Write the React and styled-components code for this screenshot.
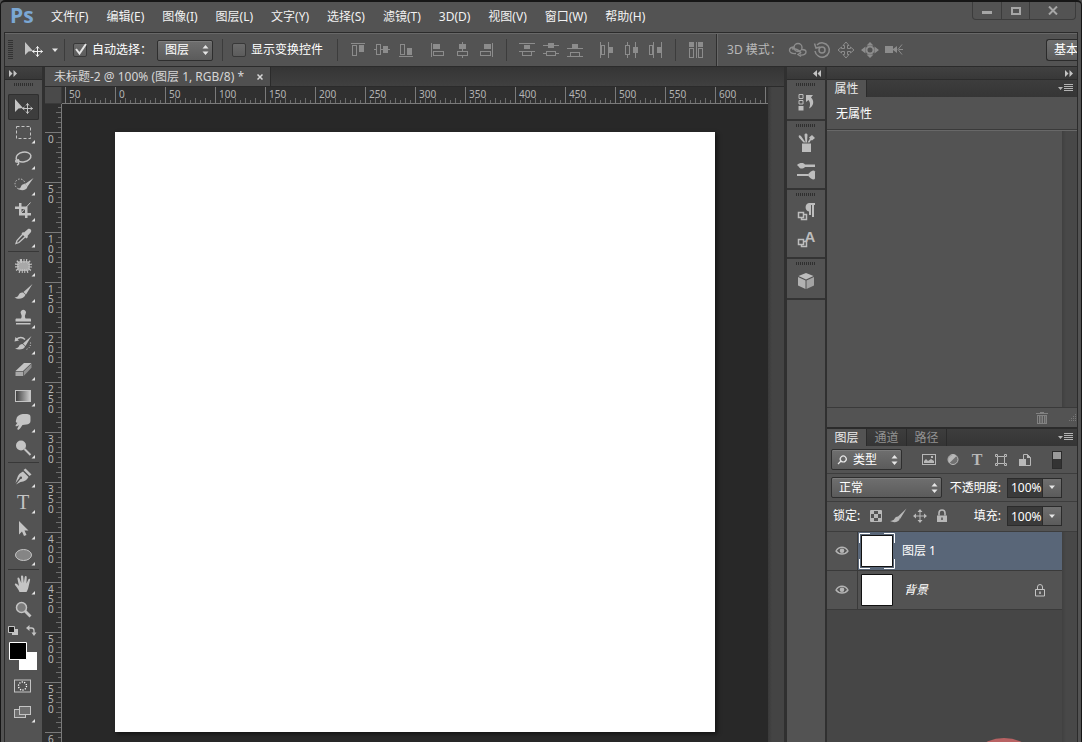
import styled, { createGlobalStyle, css } from "styled-components";

const GlobalStyle = createGlobalStyle`
  * {
    box-sizing: border-box;
  }

  body {
    margin: 0;
    background: #535353;
    color: #f0f0f0;
    font: 12px/16px "Noto Sans", "Noto Sans CJK SC", sans-serif;
  }

  button,
  input,
  select {
    margin: 0;
    padding: 0;
    border: none;
    background: none;
    color: inherit;
    font: inherit;
  }

  svg {
    display: block;
    flex: none;
  }
`;

/* ---------- window ---------- */

const Window = styled.div`
  display: flex;
  flex-direction: column;
  height: 100vh;
  overflow: hidden;
  border: solid #161616;
  border-width: 2px 1px 0;
  border-radius: 5px 5px 0 0;
  background: #535353;
`;

const TitleBar = styled.header`
  display: flex;
  flex: none;
  height: 30px;
  padding: 0 5px 0 9px;
`;

const Logo = styled.span`
  width: 41px;
  color: #7ba7d4;
  font: bold 21px/27px "Open Sans", "Noto Sans", sans-serif;
`;

const Menu = styled.nav`
  display: flex;
  flex: 1;
  gap: 18px;
  padding-top: 7px;
`;

const MenuItem = styled.a`
  color: #f2f2f2;
  text-decoration: none;
  white-space: nowrap;
`;

const WindowButtons = styled.div`
  display: flex;
  height: 18px;
  border: 1px solid #3c3c3c;
  border-top: none;
  border-radius: 0 0 4px 4px;
`;

const WindowButton = styled.button`
  display: grid;
  place-items: center;
  width: ${(props) => (props.$wide ? "46px" : "28px")};
  color: #a6a6a6;

  & + & {
    border-left: 1px solid #3c3c3c;
  }
`;

const Body = styled.div`
  display: flex;
  flex: 1;
  flex-direction: column;
  min-height: 0;
  margin: 0 3px;
  border: solid #2b2b2b;
  border-width: 1px 1px 0;
`;

/* ---------- options bar ---------- */

const OptionsBar = styled.div`
  display: flex;
  flex: none;
  align-items: center;
  height: 34px;
  overflow: hidden;
  border-top: 1px solid #686868;
  border-bottom: 1px solid #2b2b2b;
`;

const BarGrip = styled.span`
  width: 5px;
  height: 20px;
  margin: 0 11px 0 3px;
  background: repeating-linear-gradient(#333333 0 1px, transparent 1px 2px);
`;

const Divider = styled.span`
  flex: none;
  width: 1px;
  height: 22px;
  margin: 0 9px;
  background: #3c3c3c;
`;

const PresetDivider = styled(Divider)`
  margin: 0 8px 0 5px;
`;

const TallDivider = styled(Divider)`
  width: 2px;
  height: 32px;
  border-left: 1px solid #2f2f2f;
  background: #686868;
`;

const CheckLabel = styled.label`
  display: flex;
  align-items: center;
  gap: 5px;
  margin-right: 5px;
  color: #ffffff;
  white-space: nowrap;
`;

const CheckBox = styled.span`
  display: grid;

  & > * {
    grid-area: 1 / 1;
  }

  svg {
    pointer-events: none;
  }
`;

const CheckInput = styled.input`
  width: 14px;
  height: 14px;
  appearance: none;
  border: 1px solid #383838;
  border-radius: 2px;
  background: linear-gradient(#6a6a6a, #5c5c5c);
`;

const SelectBox = styled.span`
  display: grid;
  flex: none;
  align-items: center;
  width: ${(props) => props.$width};
  height: 21px;
  border: 1px solid #2e2e2e;
  border-radius: 2px;
  background: linear-gradient(#6f6f6f, #5b5b5b);
  box-shadow: inset 0 1px #7d7d7d;

  & > * {
    grid-area: 1 / 1;
  }

  svg {
    pointer-events: none;
  }
`;

const SelectInput = styled.select`
  width: 100%;
  height: 19px;
  padding-left: ${(props) => props.$indent};
  appearance: none;
  color: #ffffff;
`;

const SelectArrows = styled.svg`
  justify-self: end;
  margin-right: 3px;
`;

const IconGroup = styled.div`
  display: flex;
  flex: none;
  gap: 4px;
  margin: 0 1px;
  color: #8c8c8c;

  & + & {
    margin-left: 11px;
  }
`;

const IconButton = styled.button`
  display: grid;
  place-items: center;
  width: 20px;
  height: 20px;
`;

const CaretButton = styled.button`
  margin-left: 7px;
`;

const ModeLabel = styled.span`
  width: 60px;
  color: #b8b8b8;
  white-space: nowrap;
`;

const WorkspaceButton = styled.button`
  flex: none;
  width: 31px;
  height: 22px;
  margin-left: auto;
  overflow: hidden;
  padding-left: 7px;
  border: 1px solid #2b2b2b;
  border-right: none;
  border-radius: 3px 0 0 3px;
  background: linear-gradient(#707070, #5b5b5b);
  color: #ffffff;
  text-align: left;
  white-space: nowrap;
`;

/* ---------- workspace ---------- */

const Workspace = styled.div`
  display: flex;
  flex: 1;
  min-height: 0;
`;

const DockHeader = styled.div`
  display: flex;
  flex: none;
  align-items: center;
  justify-content: ${(props) => (props.$end ? "flex-end" : "flex-start")};
  height: 13px;
  padding: 0 4px;
  border-bottom: 1px solid #2b2b2b;
  background: linear-gradient(#414141, #383838);
  color: #c4c4c4;
`;

const gripStripes = css`
  background: repeating-linear-gradient(
    90deg,
    #2f2f2f 0 1px,
    transparent 1px 2px
  );
`;

const ToolColumn = styled.aside`
  display: flex;
  flex: none;
  flex-direction: column;
  width: 40px;
  border-right: 3px solid #303030;
`;

const Tools = styled.div`
  display: flex;
  flex-direction: column;
  padding: 3px 3px 0;
`;

const ToolGrip = styled.span`
  width: 20px;
  height: 3px;
  margin: 0 0 8px 6px;
  ${gripStripes}
`;

const ToolButton = styled.button`
  width: 31px;
  height: 26px;
  color: #c4c4c4;
  ${(props) =>
    props.$active &&
    css`
      border-radius: 2px;
      background: #3d3d3d;
      box-shadow: inset 0 0 0 1px #2f2f2f;
    `}
`;

const ToolDivider = styled.span`
  height: 1px;
  margin: 1px 0;
  background: #383838;
`;

const Swatches = styled.div`
  height: 50px;
`;

/* ---------- document ---------- */

const Document = styled.main`
  display: flex;
  flex: 1;
  flex-direction: column;
  min-width: 0;
`;

const TabStrip = styled.div`
  display: flex;
  flex: none;
  height: 20px;
  border-bottom: 1px solid #2b2b2b;
  background: linear-gradient(#353535, #404040);
`;

const DocumentTab = styled.div`
  display: flex;
  align-items: center;
  gap: 13px;
  padding: 1px 7px 0 9px;
  border-right: 1px solid #2b2b2b;
  background: #505050;
  color: #d6d6d6;
  white-space: nowrap;
`;

const DocumentView = styled.div`
  display: grid;
  flex: 1;
  grid-template: 17px 1fr / 17px 1fr 16px;
  min-height: 0;
  overflow: hidden;
`;

const RulerCorner = styled.div`
  border: solid #3a3a3a;
  border-width: 0 1px 1px 0;
  background: #4a4a4a;
`;

const HorizontalRuler = styled.div`
  display: flex;
  min-width: 0;
  overflow: hidden;
  padding-left: 3px;
  border-bottom: 1px solid #7a7a7a;
  background: #303030;
`;

const HorizontalMark = styled.span`
  flex: none;
  width: 50px;
  padding-left: 3px;
  border-left: 1px solid #7a7a7a;
  background:
    repeating-linear-gradient(90deg, transparent 0 4px, #6c6c6c 4px 5px) 0
      100% / 100% 3px no-repeat,
    repeating-linear-gradient(90deg, transparent 0 9px, #6c6c6c 9px 10px) 0
      100% / 100% 5px no-repeat;
  color: #b4b4b4;
  font-size: 10px;
  line-height: 14px;
`;

const VerticalRuler = styled.div`
  min-height: 0;
  overflow: hidden;
  border-right: 1px solid #7a7a7a;
  background: #303030;
`;

const VerticalStart = styled.div`
  height: 28px;
  background:
    repeating-linear-gradient(0deg, transparent 0 4px, #6c6c6c 4px 5px) 100% 0 /
      3px 100% no-repeat,
    repeating-linear-gradient(0deg, transparent 0 9px, #6c6c6c 9px 10px) 100%
      0 / 5px 100% no-repeat;
`;

const VerticalMark = styled.div`
  display: flex;
  flex-direction: column;
  height: 50px;
  padding: 1px 0 0 3px;
  border-top: 1px solid #7a7a7a;
  background:
    repeating-linear-gradient(transparent 0 4px, #6c6c6c 4px 5px) 100% 0 / 3px
      100% no-repeat,
    repeating-linear-gradient(transparent 0 9px, #6c6c6c 9px 10px) 100% 0 / 5px
      100% no-repeat;
  color: #b4b4b4;
  font-size: 10px;
  line-height: 10px;
`;

const ScrollTrack = styled.div`
  background: linear-gradient(90deg, #393939, #444444 4px);
`;

const Pasteboard = styled.div`
  min-width: 0;
  min-height: 0;
  overflow: hidden;
  padding: 28px 0 0 53px;
  background: #282828;
`;

const Paper = styled.div`
  width: 600px;
  height: 600px;
  background: #ffffff;
  box-shadow: 2px 2px 4px #141414;
`;

/* ---------- icon dock ---------- */

const IconDock = styled.aside`
  display: flex;
  flex: none;
  flex-direction: column;
  width: 43px;
  border: solid #303030;
  border-width: 0 2px 0 3px;
`;

const DockGroup = styled.div`
  display: flex;
  flex-direction: column;
  align-items: center;
  padding: 3px 0;
  border-bottom: 2px solid #343434;
`;

const DockGrip = styled.span`
  width: 20px;
  height: 3px;
  margin-bottom: 2px;
  ${gripStripes}
`;

const DockButton = styled.button`
  display: grid;
  place-items: center;
  width: 30px;
  height: 28px;
  color: #bdbdbd;
`;

/* ---------- panels ---------- */

const Panels = styled.aside`
  display: flex;
  flex: none;
  flex-direction: column;
  width: 250px;
`;

const PanelTabs = styled.div`
  display: flex;
  flex: none;
  height: 17px;
  background: linear-gradient(#3d3d3d, #353535);
`;

const PanelTab = styled.button`
  width: 40px;
  border-right: 1px solid #2b2b2b;
  background: ${(props) => (props.$active ? "#535353" : "transparent")};
  color: ${(props) => (props.$active ? "#ececec" : "#929292")};
`;

const PanelMenuButton = styled.button`
  margin: 0 4px 0 auto;
  color: #b4b4b4;
`;

const PropertiesMessage = styled.p`
  flex: none;
  height: 33px;
  margin: 0;
  padding: 9px;
  border-bottom: 1px solid #3a3a3a;
  color: #ffffff;
`;

const PropertiesBody = styled.div`
  display: flex;
  flex: none;
  justify-content: flex-end;
  height: 277px;
  border-top: 1px solid #686868;
`;

const PanelTrack = styled.div`
  width: 15px;
  background: linear-gradient(90deg, #404040, #484848 4px);
`;

const PanelFooter = styled.div`
  display: flex;
  flex: none;
  align-items: center;
  justify-content: flex-end;
  gap: 12px;
  height: 22px;
  border-top: 1px solid #3a3a3a;
  border-bottom: 2px solid #2b2b2b;
  color: #828282;
`;

const PanelRow = styled.div`
  display: flex;
  flex: none;
  align-items: center;
  height: 28px;
  padding: 0 15px 0 4px;
  border-bottom: 1px solid #3d3d3d;
  color: #ffffff;
`;

const LockRow = styled(PanelRow)`
  height: 30px;
  padding-bottom: 1px;
`;

const RowLabel = styled.label`
  margin: 0 6px 0 auto;
  white-space: nowrap;
`;

const LockLabel = styled.span`
  width: 35px;
  padding-left: 2px;
  white-space: nowrap;
`;

const RowIcons = styled.div`
  display: flex;
  gap: ${(props) => props.$gap};
  margin-left: ${(props) => props.$indent};
  color: #b8b8b8;
`;

const ToggleButton = styled.button`
  width: 10px;
  height: 18px;
  margin-left: auto;
  border: 1px solid #2b2b2b;
  background: linear-gradient(#9a9a9a 0 7px, #333333 7px);
`;

const ValueInput = styled.input`
  width: 36px;
  height: 20px;
  padding-left: 3px;
  border: 1px solid #2b2b2b;
  background: #3a3a3a;
`;

const ValueButton = styled.button`
  display: grid;
  place-items: center;
  width: 19px;
  height: 20px;
  border: 1px solid #2b2b2b;
  border-left: none;
  background: linear-gradient(#707070, #5b5b5b);
`;

const LayerArea = styled.div`
  display: flex;
  flex: 1;
  min-height: 0;
  background: #464646;
`;

const LayerList = styled.ul`
  flex: 1;
  margin: 0;
  padding: 0;
  list-style: none;
`;

const LayerItem = styled.li`
  display: flex;
  align-items: center;
  height: 39px;
  padding-right: 16px;
  border-bottom: 1px solid #3a3a3a;
  background: ${(props) =>
    props.$selected
      ? "linear-gradient(90deg, #535353 30px, #596678 30px)"
      : "#535353"};
  color: #ffffff;
`;

const EyeButton = styled.button`
  display: grid;
  place-items: center;
  width: 31px;
  height: 38px;
  border-right: 1px solid #3a3a3a;
  color: #b4b4b4;
`;

const LayerName = styled.span`
  flex: 1;
  padding-left: ${(props) => (props.$italic ? "8px" : "6px")};
  font-style: ${(props) => (props.$italic ? "italic" : "normal")};
`;

const Badge = styled.span`
  position: fixed;
  right: 36px;
  bottom: -80px;
  width: 84px;
  height: 84px;
  border-radius: 50%;
  background: #b86263;
`;

/* ---------- icons ---------- */

const brush = (
  <path d="M24.5 5 15.5 13l2.5 2.5zM15 13.5c-2.4-.3-3.8 1-4.500 2.700-.6 1.400-1.800 2-4 2.300 3.500 2.300 9.500 1.400 11-2.700z" />
);

const fourWay = (x, y, r) => (
  <g fill="none" stroke="currentColor" transform={`translate(${x} ${y})`}>
    <path d={`M${-r} 0H${r}M0 ${-r}V${r}`} />
    <path
      d={`M-1.5 ${2 - r}L0 ${-r}l1.5 2M-1.5 ${r - 2}L0 ${r}l1.5-2M${
        2 - r
      }-1.5L${-r} 0l2 1.5M${r - 2}-1.5L${r} 0l-2 1.5`}
    />
  </g>
);

const toolIcons = {
  move: (
    <>
      <path d="M7 5v13l3.5-3.5L15 14z" />
      {fourWay(19.5, 14.5, 5)}
    </>
  ),
  marquee: (
    <rect
      x="8.5"
      y="6.5"
      width="14"
      height="12"
      fill="none"
      stroke="currentColor"
      strokeDasharray="3 2"
    />
  ),
  lasso: (
    <g fill="none" stroke="currentColor" strokeWidth="1.5">
      <ellipse
        cx="15.500"
        cy="11"
        rx="7.5"
        ry="4.8"
        transform="rotate(-12 15.5 11)"
      />
      <path d="M9 13.500c-2 1-1.500 3 .5 2.500s1.500-2.500 0-2.500M10 16c1.500 1 .5 2.500-1 3" />
    </g>
  ),
  quickSelect: (
    <>
      <circle
        cx="12"
        cy="12"
        r="5"
        fill="none"
        stroke="currentColor"
        strokeDasharray="1.5 1.5"
      />
      <path d="m25.500 6-8.500 6 2.500 2.500zM16.500 12c-2 0-3 1-3.500 2.500-.5 1.500-1.500 2-3 2.500 3 2 9 1.500 9.500-2.500z" />
    </>
  ),
  crop: (
    <>
      <path d="M11 5h2.500v10H23v2.500H11zM7 8.500h12.500V20H17v-9H7z" />
      <path d="m12.500 15.500 10-11" stroke="currentColor" />
    </>
  ),
  eyedropper: (
    <>
      <path d="M16 8.500 20 5c2-1 4 1 3 3l-3.500 4 .5 1-1.500 1.500-5-5L15 8z" />
      <path
        d="m15 10-6 6.500-1 3 3-1 6.500-6"
        fill="none"
        stroke="currentColor"
        strokeWidth="1.3"
      />
    </>
  ),
  patch: (
    <>
      <rect x="9" y="8" width="13" height="10" rx="3" fillOpacity=".75" />
      <rect
        x="9"
        y="8"
        width="13"
        height="10"
        rx="4"
        fill="none"
        stroke="currentColor"
        strokeWidth="4"
        strokeDasharray="1 1.5"
      />
    </>
  ),
  brush,
  stamp: (
    <path d="M13 9a2.700 2.700 0 1 1 4.600 0c-1 1.500-.8 3 0 4.500H22c.8 0 1 .5 1 1.500v1.500H7.500V15c0-1 .2-1.500 1-1.500H13c.8-1.500 1-3 0-4.500zM8 18h14.500v1.500H8z" />
  ),
  historyBrush: (
    <>
      <path d="m23.500 5-8.500 7.500 2.500 2.500zM14.500 13c-2 0-3 1-3.500 2.200-.5 1.300-2 2-4 2.300 3.500 2 9.500 1 10-2.200z" />
      <path
        d="M8 8.500c4-3 7-2 9 0"
        fill="none"
        stroke="currentColor"
        strokeWidth="1.5"
      />
      <path d="m6.500 10.500 1-4.500 3.500 3.500z" />
      <path
        d="M22.500 11.500c.5 3-1 6-4.500 7"
        fill="none"
        stroke="currentColor"
        strokeDasharray="1 1.5"
      />
    </>
  ),
  eraser: (
    <>
      <path d="M7.500 14 16 6h7.500L15 14z" />
      <path d="M7.500 14.700H15V19H7.500z" fillOpacity=".75" />
      <path d="m15.700 14.400 7.800-7.600v4L15.700 19z" fillOpacity=".55" />
    </>
  ),
  gradient: (
    <>
      <defs>
        <linearGradient id="tool-gradient">
          <stop stopColor="#3c3c3c" />
          <stop offset="1" stopColor="#cfcfcf" />
        </linearGradient>
      </defs>
      <rect
        x="7.5"
        y="7.5"
        width="15"
        height="11"
        fill="url(#tool-gradient)"
        stroke="currentColor"
      />
    </>
  ),
  smudge: (
    <path d="M9 8c2-2.500 5-3 8-3 3 0 5.500 0 5.500 3v4c0 2-2 3.500-4 3.500l-4 .5c-1 1-1.500 3-3.500 4.500-1.500.7-2-.5-1.500-1.300l1.500-3c-1 .5-2.500 1.500-3.300 1-.7-.7 1-2 1.800-3.500-1.500.5-2-1-1.500-2.500z" />
  ),
  dodge: (
    <>
      <circle cx="13" cy="10.500" r="5" />
      <path d="m16.500 14 6 6" stroke="currentColor" strokeWidth="2" />
    </>
  ),
  pen: (
    <>
      <path d="m17.500 4.500 6 6-2 1.500-6-6z" />
      <path d="M15 7.500 20.500 13c-1.500 3-4 4.500-8 5L8 20.500l4.500-5.500a1.300 1.300 0 1 0-1-1L7.500 19 9 14.500c1-4 3-5.500 6-7z" />
    </>
  ),
  type: (
    <text
      x="15"
      y="19"
      textAnchor="middle"
      fontFamily="Liberation Serif, serif"
      fontSize="20"
    >
      T
    </text>
  ),
  select: <path d="M11 5v13.500l3-3 2 4.500 2.500-1-2-4.500h4z" />,
  ellipse: (
    <ellipse
      cx="15.500"
      cy="13"
      rx="8"
      ry="5.500"
      fill="#858585"
      stroke="currentColor"
    />
  ),
  hand: (
    <path d="M11.500 21c-1-3-3-5-4.500-7-.7-1.500.8-2.200 2-1l2 2L9.500 8c-.3-1.500 1.300-2 2-.5L13.300 12l-.3-6.500c0-1.500 2-1.500 2.200 0l.6 6.500.9-6c.3-1.500 2-1.200 2 .3l-.2 6.200 1.800-4c.6-1.300 2-.8 1.800.5l-1.500 6.500c-.5 2.500-1.100 3.500-2.100 5.500z" />
  ),
  zoom: (
    <>
      <circle
        cx="13.500"
        cy="10.500"
        r="5"
        fill="#7c7c7c"
        stroke="currentColor"
        strokeWidth="1.5"
      />
      <path d="m17 14 5.500 5.500" stroke="currentColor" strokeWidth="2.800" />
    </>
  ),
  mask: (
    <>
      <rect
        x="6.5"
        y="7"
        width="16"
        height="12"
        fill="none"
        stroke="currentColor"
      />
      <circle
        cx="14.500"
        cy="13"
        r="4"
        fill="none"
        stroke="#ffffff"
        strokeWidth="1.3"
        strokeDasharray="1.2 1.3"
      />
    </>
  ),
  screen: (
    <g fill="#6e6e6e" stroke="currentColor">
      <rect x="6.500" y="10.500" width="11" height="8" />
      <rect x="11.500" y="7.500" width="11" height="8" />
    </g>
  ),
};

const smallIcons = {
  alignTop: (
    <path
      d="M3 3h14v1H3zM4 5h5v11H4zm1 1v9h3V6zM11 5h5v7h-5z"
      fillRule="evenodd"
    />
  ),
  alignMiddle: (
    <path
      d="M2 9h2v1H2zM9 9h2v1H9zM16 9h2v1h-2zM4 4h5v11H4zm1 1v9h3V5zM11 6h5v7h-5z"
      fillRule="evenodd"
    />
  ),
  alignBottom: (
    <path
      d="M3 16h14v1H3zM4 4h5v11H4zm1 1v9h3V5zM11 8h5v7h-5z"
      fillRule="evenodd"
    />
  ),
  alignLeft: (
    <path
      d="M3 3h1v14H3zM5 4h7v5H5zM5 11h11v5H5zm1 1v3h9v-3z"
      fillRule="evenodd"
    />
  ),
  alignCenter: (
    <path
      d="M10 2h1v2h-1zM10 9h1v2h-1zM10 16h1v2h-1zM7 4h7v5H7zM5 11h11v5H5zm1 1v3h9v-3z"
      fillRule="evenodd"
    />
  ),
  alignRight: (
    <path
      d="M16 3h1v14h-1zM8 4h7v5H8zM4 11h11v5H4zm1 1v3h9v-3z"
      fillRule="evenodd"
    />
  ),
  spreadTop: (
    <path
      d="M2 3h16v1H2zM7 5h6v4H7zM2 11h16v1H2zM5 12h10v4H5zm1 0v3h8v-3z"
      fillRule="evenodd"
    />
  ),
  spreadMiddle: (
    <path
      d="M2 5h16v1H2zM7 3h6v2H7zM7 6h6v2H7zM2 13h3v1H2zM15 13h3v1h-3zM5 11h10v5H5zm1 1v3h8v-3z"
      fillRule="evenodd"
    />
  ),
  spreadBottom: (
    <path
      d="M7 4h6v4H7zM2 8h16v1H2zM2 16h16v1H2zM5 12h10v4H5zm1 1v3h8v-3z"
      fillRule="evenodd"
    />
  ),
  spreadLeft: (
    <path
      d="M3 2h1v16H3zM4 5h4v10H4zm1 1v8h2V6zM11 2h1v16h-1zM12 7h4v6h-4z"
      fillRule="evenodd"
    />
  ),
  spreadCenter: (
    <path
      d="M6 2h1v3H6zM6 15h1v3H6zM4 5h5v10H4zm1 1v8h3V6zM14 2h1v5h-1zM14 13h1v5h-1zM12 7h5v6h-5z"
      fillRule="evenodd"
    />
  ),
  spreadRight: (
    <path
      d="M8 2h1v16H8zM4 5h4v10H4zm1 1v8h2V6zM16 2h1v16h-1zM12 7h4v6h-4z"
      fillRule="evenodd"
    />
  ),
  autoAlign: (
    <path
      d="M3 2h5v5H3zM12 2h5v5h-5zM10 2h1v16h-1zM3 8h5v10H3zm1 1v8h3V9zM12 8h5v10h-5zm1 1v8h3V9z"
      fillRule="evenodd"
    />
  ),
  orbit: (
    <g fill="none" stroke="currentColor" strokeWidth="1.4">
      <path d="M8 13.500c-4 .5-6.500-1-6.500-3.200C1.500 8 4 7 6.500 7" />
      <circle cx="10" cy="7.500" r="4" />
      <path d="M4 9c3-1 7 1 9 4M12 15c4 .5 6-1 6-3s-1.500-2.500-4-2.500" />
      <path d="m13 12.500-3 2 3 2" />
    </g>
  ),
  roll: (
    <g fill="none" stroke="currentColor" strokeWidth="1.5">
      <circle cx="10" cy="10" r="3" />
      <path d="M5 5A7.200 7.200 0 1 1 3 11M2.500 3.500 4 8l4-1" />
    </g>
  ),
  pan: (
    <path
      d="m10 2 3 3.500h-1.500v3h3V7l3.500 3-3.500 3v-1.500h-3v3H13L10 18l-3-3.500h1.500v-3h-3V13L2 10l3.500-3v1.500h3v-3H7z"
      fill="none"
      stroke="currentColor"
    />
  ),
  slide: (
    <>
      <circle
        cx="10"
        cy="10"
        r="3.500"
        fill="none"
        stroke="currentColor"
        strokeWidth="2"
      />
      <path d="m10 2 3.500 3.500h-7zM10 18l3.500-3.500h-7zM1 10l4.500-3.500v7zM19 10l-4.500-3.500v7z" />
    </>
  ),
  camera: (
    <>
      <path d="M1 6h8v7H1zM9 9l4-3v7L9 10z" />
      <path
        d="m18 4.500-4 5 4 5M15 9.500h4"
        fill="none"
        stroke="currentColor"
      />
    </>
  ),
  image: (
    <>
      <rect
        x="3.500"
        y="4.500"
        width="13"
        height="10"
        fill="none"
        stroke="currentColor"
      />
      <path d="M5 13v-2l2-2 2 2 3-2 3 2v2zM12 6h2v2h-2z" />
    </>
  ),
  adjust: (
    <>
      <circle cx="10" cy="9.500" r="5" fill="#707070" stroke="currentColor" />
      <path d="M13.500 6A5 5 0 0 0 6.500 13z" />
    </>
  ),
  textLayer: (
    <text
      x="10"
      y="15"
      textAnchor="middle"
      fontFamily="Liberation Serif, serif"
      fontWeight="bold"
      fontSize="16"
    >
      T
    </text>
  ),
  shape: (
    <g fill="none" stroke="currentColor">
      <path d="M6.500 7v6M13.500 7v6M7 6.500h6M7 13.500h6" />
      <path d="M4.500 4.500h2v2h-2zM13.500 4.500h2v2h-2zM4.500 13.500h2v2h-2zM13.500 13.500h2v2h-2z" />
    </g>
  ),
  smartObject: (
    <>
      <path
        d="M8.500 9V4.500h4l3 3v8H11"
        fill="none"
        stroke="currentColor"
      />
      <path d="M12 4v4h4zM4 9h7v7H4z" />
    </>
  ),
  pixels: (
    <>
      <path d="M4.500 4.500h11v11h-11z" fill="none" stroke="currentColor" />
      <path d="M5 5h3v3H5zM12 5h3v3h-3zM8 8h4v4H8zM5 12h3v3H5zM12 12h3v3h-3z" />
    </>
  ),
  paint: (
    <path d="m18.500 2.500-8.500 8 2.200 2.200zM10 10.500c-2 0-3 1-3.500 2.300-.7 1.400-2.300 2-4.500 2.200 3.500 2 9 1.500 9.800-2.500z" />
  ),
  position: (
    <>
      {fourWay(10, 10, 6)}
      <path d="M10 3l2.500 3h-5zM10 17l2.500-3h-5zM3 10l3-2.500v5zM17 10l-3-2.500v5z" />
    </>
  ),
  lock: (
    <>
      <path d="M5 9.500h10V16H5z" />
      <path
        d="M7 9.500V7a3 3 0 0 1 6 0v2.500"
        fill="none"
        stroke="currentColor"
        strokeWidth="1.6"
      />
      <path d="M9.300 11.500h1.400V14H9.300z" fill="#4a4a4a" />
    </>
  ),
  outlineLock: (
    <g fill="none" stroke="currentColor">
      <path d="M5.500 9.500h9V16h-9zM7.500 9.500V7a2.500 2.500 0 0 1 5 0v2.500" />
      <path d="M10 11.500V14" strokeWidth="1.5" />
    </g>
  ),
  eye: (
    <>
      <path
        d="M4 10c3-5 9-5 12 0-3 4-9 4-12 0z"
        fill="none"
        stroke="currentColor"
        strokeWidth="1.3"
      />
      <circle cx="10" cy="9.700" r="2.300" />
    </>
  ),
  trash: (
    <path
      d="M8 4h4v1h4v1H4V5h4zM5 7h10v9H5zm1 1v7h1V8zm2.500 0v7h1V8zm2.500 0v7h1V8zm2.500 0v7h.5V8z"
      fillRule="evenodd"
    />
  ),
  history: (
    <>
      <path
        d="M3 2.500h4v4H3zM3 8.500h4v3.500H3z"
        fill="none"
        stroke="currentColor"
      />
      <path d="M2.500 14h5v4.500h-5zM10 3h7l-2 2.500c3.500 3 3 8.500-2 11 1.500-3 1.500-6-.5-8.500L10 10z" />
    </>
  ),
  brushPresets: (
    <path d="M6 10.500h9V19H6zM7.500 9.500 3 4.500C2 2.500 3.500 1.500 5 3l4.500 6.500zM9.500 9.500 8.500 2c0-2 3-2 3 0l-.5 7.500zM11.500 9.500l2.500-4-1-1 3-2.500 3 3-3 2.500-1-.5-1.500 2.500z" />
  ),
  brushes: (
    <>
      <path d="M1 4c3-2.500 6-2.500 8-.5h10v2.500H9c-2 2-5 2-6 0zM1 13h11v2H1z" />
      <path d="M11.500 14c2-2.500 4-4.500 6.500-4.500l1 1v7l-1 1c-2.500 0-4.500-2-6.500-4.500z" />
    </>
  ),
  paragraph: (
    <>
      <path d="M13 1h6v2h-1v12h-2V3h-1v10h-2V9.500c-4.500-.5-4.500-8 0-8.500z" />
      <path
        d="M2.500 10.500h5v5h-5zM5.500 15.500v2h5v-5h-3"
        fill="none"
        stroke="currentColor"
        strokeWidth="1.5"
      />
    </>
  ),
  character: (
    <>
      <text
        x="14"
        y="12"
        textAnchor="middle"
        fontFamily="Liberation Sans, sans-serif"
        fontWeight="bold"
        fontSize="15"
      >
        A
      </text>
      <path
        d="M2.500 9.500h5v5h-5zM5.500 14.500v2h5v-5h-3"
        fill="none"
        stroke="currentColor"
        strokeWidth="1.5"
      />
    </>
  ),
  cube: (
    <>
      <path d="m10 2 7.500 3-7.500 3.500L2.500 5z" />
      <path d="m2 6 7.500 3.500V18L2 14.500z" fillOpacity=".9" />
      <path d="m18 6-7.500 3.500V18l7.500-3.500z" fillOpacity=".75" />
    </>
  ),
};

const Icon = ({ name }) => (
  <svg width="20" height="20" viewBox="0 0 20 20" fill="currentColor">
    {smallIcons[name]}
  </svg>
);

const Caret = () => (
  <svg width="8" height="5" viewBox="0 0 8 5" fill="#e6e6e6">
    <path d="M1 .5h6L4 4z" />
  </svg>
);

const DoubleArrow = ({ left }) => (
  <svg width="8" height="7" viewBox="0 0 8 7" fill="currentColor">
    {left ? (
      <path d="M4 0v7L0 3.500zM8 0v7L4.500 3.500z" />
    ) : (
      <path d="M0 0v7l3.500-3.500zM4.500 0v7L8 3.500z" />
    )}
  </svg>
);

const PanelMenu = () => (
  <PanelMenuButton type="button" aria-label="面板菜单">
    <svg width="15" height="9" viewBox="0 0 15 9" fill="currentColor">
      <path d="M0 3h5L2.500 6zM6 0h9v1H6zM6 2h9v1H6zM6 4h9v1H6zM6 6h9v1H6z" />
    </svg>
  </PanelMenuButton>
);

const Select = ({ label, width, indent = "7px", icon, children }) => (
  <SelectBox $width={width}>
    <SelectInput aria-label={label} $indent={indent}>
      <option>{children}</option>
    </SelectInput>
    {icon}
    <SelectArrows width="7" height="10" viewBox="0 0 7 10" fill="#e6e6e6">
      <path d="M3.500 0 6.500 3.500h-6zM3.500 10l3-3.500h-6z" />
    </SelectArrows>
  </SelectBox>
);

const Check = ({ checked, children }) => (
  <CheckLabel>
    <CheckBox>
      <CheckInput type="checkbox" defaultChecked={checked} />
      {checked && (
        <svg width="14" height="14" viewBox="0 0 14 14">
          <path
            d="m3 6 3.500 4.500L13 1"
            fill="none"
            stroke="#e4e4e4"
            strokeWidth="2"
          />
        </svg>
      )}
    </CheckBox>
    {children}
  </CheckLabel>
);

const IconButtons = ({ names }) => (
  <IconGroup>
    {names.map((name) => (
      <IconButton key={name} type="button" aria-label={name}>
        <Icon name={name} />
      </IconButton>
    ))}
  </IconGroup>
);

const Tool = ({ name, active, plain }) => (
  <ToolButton type="button" aria-label={name} $active={active}>
    <svg width="31" height="26" viewBox="0 0 31 26" fill="currentColor">
      {toolIcons[name]}
      {!plain && !active && <path d="M27 20v3.500h-3.500z" fill="#e6e6e6" />}
    </svg>
  </ToolButton>
);

/* ---------- page ---------- */

const menus = [
  "文件(F)",
  "编辑(E)",
  "图像(I)",
  "图层(L)",
  "文字(Y)",
  "选择(S)",
  "滤镜(T)",
  "3D(D)",
  "视图(V)",
  "窗口(W)",
  "帮助(H)",
];

const toolGroups = [
  ["move", "marquee", "lasso", "quickSelect", "crop", "eyedropper"],
  [
    "patch",
    "brush",
    "stamp",
    "historyBrush",
    "eraser",
    "gradient",
    "smudge",
    "dodge",
  ],
  ["pen", "type", "select", "ellipse"],
  ["hand", "zoom"],
];

const dockGroups = [
  ["history"],
  ["brushPresets", "brushes"],
  ["paragraph", "character"],
  ["cube"],
];

// The rulers run as far as the 600px page does, the last mark has no number
const horizontalMarks = [
  50, 0, 50, 100, 150, 200, 250, 300, 350, 400, 450, 500, 550, 600, "",
];
const verticalMarks = [
  "0",
  "50",
  "100",
  "150",
  "200",
  "250",
  "300",
  "350",
  "400",
  "450",
  "500",
  "550",
  "600",
];

const Options = () => (
  <OptionsBar>
    <BarGrip />
    <svg width="20" height="20" viewBox="6 3 20 20" fill="#c4c4c4">
      {toolIcons.move}
    </svg>
    <CaretButton type="button" aria-label="工具预设">
      <Caret />
    </CaretButton>
    <PresetDivider />
    <Check checked>自动选择：</Check>
    <Select label="自动选择" width="56px">
      图层
    </Select>
    <Divider />
    <Check>显示变换控件</Check>
    <Divider />
    <IconButtons names={["alignTop", "alignMiddle", "alignBottom"]} />
    <IconButtons names={["alignLeft", "alignCenter", "alignRight"]} />
    <Divider />
    <IconButtons names={["spreadTop", "spreadMiddle", "spreadBottom"]} />
    <IconButtons names={["spreadLeft", "spreadCenter", "spreadRight"]} />
    <Divider />
    <IconButtons names={["autoAlign"]} />
    <TallDivider />
    <ModeLabel>3D 模式：</ModeLabel>
    <IconButtons names={["orbit", "roll", "pan", "slide", "camera"]} />
    <WorkspaceButton type="button" aria-label="基本功能">
      基本
    </WorkspaceButton>
  </OptionsBar>
);

const Toolbox = () => (
  <ToolColumn>
    <DockHeader>
      <DoubleArrow />
    </DockHeader>
    <Tools>
      <ToolGrip />
      {toolGroups.map((group, index) => [
        index > 0 && <ToolDivider key={index} />,
        ...group.map((name) => (
          <Tool
            key={name}
            name={name}
            active={name === "move"}
            plain={name === "zoom"}
          />
        )),
      ])}
      <Swatches>
        <svg width="31" height="50" viewBox="0 0 31 50">
          <path d="M4 6h6v6H4z" fill="#c4c4c4" />
          <path d="M.5 3.500h6v6h-6z" fill="#222222" stroke="#c4c4c4" />
          <path
            d="M20 5h3.500c1.500 0 2.500 1 2.500 2.500V11"
            fill="none"
            stroke="#c4c4c4"
            strokeWidth="1.3"
          />
          <path d="m18 5 3.500-3v6zM23.500 9.500h5L26 13z" fill="#c4c4c4" />
          <path d="M11 29h18v18H11z" fill="#ffffff" />
          <path d="M1.500 19.500h17v17h-17z" fill="#000000" stroke="#ffffff" />
        </svg>
      </Swatches>
      <Tool name="mask" plain />
      <Tool name="screen" />
    </Tools>
  </ToolColumn>
);

const Canvas = () => (
  <Document>
    <TabStrip>
      <DocumentTab>
        未标题-2 @ 100% (图层 1, RGB/8) *
        <button type="button" aria-label="关闭">
          <svg width="6" height="6" viewBox="0 0 6 6">
            <path
              d="m.5.500 5 5m0-5-5 5"
              stroke="#d6d6d6"
              strokeWidth="1.5"
            />
          </svg>
        </button>
      </DocumentTab>
    </TabStrip>
    <DocumentView>
      <RulerCorner />
      <HorizontalRuler>
        {horizontalMarks.map((mark, index) => (
          <HorizontalMark key={index}>{mark}</HorizontalMark>
        ))}
      </HorizontalRuler>
      <ScrollTrack />
      <VerticalRuler>
        <VerticalStart />
        {verticalMarks.map((mark) => (
          <VerticalMark key={mark}>
            {[...mark].map((digit, index) => (
              <span key={index}>{digit}</span>
            ))}
          </VerticalMark>
        ))}
      </VerticalRuler>
      <Pasteboard>
        <Paper />
      </Pasteboard>
      <ScrollTrack />
    </DocumentView>
  </Document>
);

const Layer = ({ name, selected, locked }) => (
  <LayerItem $selected={selected}>
    <EyeButton type="button" aria-label="显示图层">
      <Icon name="eye" />
    </EyeButton>
    <svg width="38" height="38" viewBox="0 0 38 38">
      <path d="M3.500 3.500h31v31h-31z" fill="#ffffff" stroke="#111111" />
      {selected && (
        <path
          d="M1.500 11V1.500H12M26 1.500h10.500V11M36.500 27v9.500H26M12 36.500H1.500V27"
          fill="none"
          stroke="#ffffff"
        />
      )}
    </svg>
    <LayerName $italic={locked}>{name}</LayerName>
    {locked && (
      <svg width="12" height="20" viewBox="4 0 12 20" color="#c4c4c4">
        {smallIcons.outlineLock}
      </svg>
    )}
  </LayerItem>
);

const ValueField = ({ id, label }) => (
  <>
    <RowLabel htmlFor={id}>{label}</RowLabel>
    <ValueInput id={id} defaultValue="100%" />
    <ValueButton type="button" aria-label={label}>
      <Caret />
    </ValueButton>
  </>
);

const RowIconButtons = ({ names, gap, indent }) => (
  <RowIcons $gap={gap} $indent={indent}>
    {names.map((name) => (
      <IconButton key={name} type="button" aria-label={name}>
        <Icon name={name} />
      </IconButton>
    ))}
  </RowIcons>
);

const SidePanels = () => (
  <Panels>
    <DockHeader $end>
      <DoubleArrow />
    </DockHeader>
    <PanelTabs>
      <PanelTab type="button" $active>
        属性
      </PanelTab>
      <PanelMenu />
    </PanelTabs>
    <PropertiesMessage>无属性</PropertiesMessage>
    <PropertiesBody>
      <PanelTrack />
    </PropertiesBody>
    <PanelFooter>
      <Icon name="trash" />
      <svg width="13" height="12" viewBox="0 0 13 12" fill="#777777">
        <path d="M11 2h1v1h-1zM9 4h1v1H9zM11 4h1v1h-1zM7 6h1v1H7zM9 6h1v1H9zM11 6h1v1h-1zM5 8h1v1H5zM7 8h1v1H7zM9 8h1v1H9zM11 8h1v1h-1z" />
      </svg>
    </PanelFooter>
    <PanelTabs>
      <PanelTab type="button" $active>
        图层
      </PanelTab>
      <PanelTab type="button">通道</PanelTab>
      <PanelTab type="button">路径</PanelTab>
      <PanelMenu />
    </PanelTabs>
    <PanelRow>
      <Select
        label="图层过滤"
        width="71px"
        indent="21px"
        icon={
          <svg width="20" height="14" viewBox="0 0 20 14">
            <path
              d="M9 8 6 11M9 8a3 3 0 1 1 4.500 0A3 3 0 0 1 9 8"
              fill="none"
              stroke="#e6e6e6"
              strokeWidth="1.2"
            />
          </svg>
        }
      >
        类型
      </Select>
      <RowIconButtons
        names={["image", "adjust", "textLayer", "shape", "smartObject"]}
        gap="4px"
        indent="17px"
      />
      <ToggleButton type="button" aria-label="过滤开关" />
    </PanelRow>
    <PanelRow>
      <Select label="混合模式" width="111px">
        正常
      </Select>
      <ValueField id="opacity" label="不透明度:" />
    </PanelRow>
    <LockRow>
      <LockLabel>锁定:</LockLabel>
      <RowIconButtons
        names={["pixels", "paint", "position", "lock"]}
        gap="2px"
        indent="0"
      />
      <ValueField id="fill" label="填充:" />
    </LockRow>
    <LayerArea>
      <LayerList>
        <Layer name="图层 1" selected />
        <Layer name="背景" locked />
      </LayerList>
      <PanelTrack />
    </LayerArea>
  </Panels>
);

const App = () => (
  <>
    <GlobalStyle />
    <Window>
      <TitleBar>
        <Logo>Ps</Logo>
        <Menu>
          {menus.map((menu) => (
            <MenuItem key={menu} href="#">
              {menu}
            </MenuItem>
          ))}
        </Menu>
        <WindowButtons>
          <WindowButton type="button" aria-label="最小化">
            <svg width="10" height="8" viewBox="0 0 10 8">
              <path d="M0 4h10v3H0z" fill="currentColor" />
            </svg>
          </WindowButton>
          <WindowButton type="button" aria-label="最大化">
            <svg width="10" height="8" viewBox="0 0 10 8">
              <path
                d="M1 1h8v6H1z"
                fill="none"
                stroke="currentColor"
                strokeWidth="2"
              />
            </svg>
          </WindowButton>
          <WindowButton type="button" aria-label="关闭" $wide>
            <svg width="10" height="9" viewBox="0 0 10 9">
              <path
                d="m1 .5 8 8m0-8-8 8"
                stroke="currentColor"
                strokeWidth="2"
              />
            </svg>
          </WindowButton>
        </WindowButtons>
      </TitleBar>
      <Body>
        <Options />
        <Workspace>
          <Toolbox />
          <Canvas />
          <IconDock>
            <DockHeader $end>
              <DoubleArrow left />
            </DockHeader>
            {dockGroups.map((group) => (
              <DockGroup key={group[0]}>
                <DockGrip />
                {group.map((name) => (
                  <DockButton key={name} type="button" aria-label={name}>
                    <Icon name={name} />
                  </DockButton>
                ))}
              </DockGroup>
            ))}
          </IconDock>
          <SidePanels />
        </Workspace>
      </Body>
    </Window>
    <Badge />
  </>
);

export default App;
